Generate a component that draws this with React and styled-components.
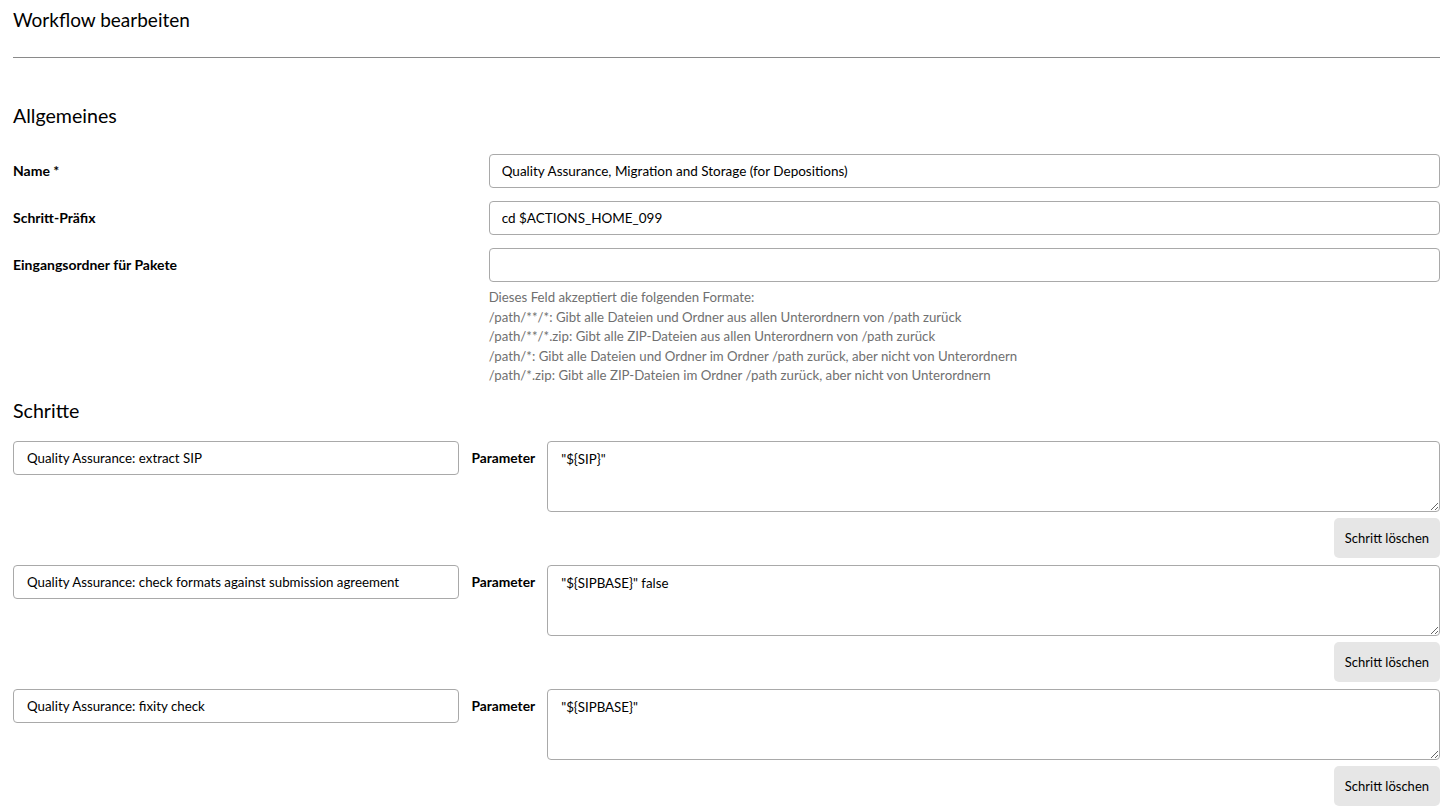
import React from "react";
import styled, { createGlobalStyle } from "styled-components";

const Global = createGlobalStyle`
  html, body { margin: 0; padding: 0; background: #fff; }
  body { font-family: "Lato", "Open Sans", sans-serif; color: #000; }
  * { box-sizing: border-box; }
`;

const Page = styled.div`
  padding: 8px 13px 0 13px;
`;

const Title = styled.h1`
  margin: 0;
  font-size: 19px;
  line-height: 24px;
  font-weight: 400;
`;

const Rule = styled.hr`
  margin: 25px 0 0 0;
  border: 0;
  border-top: 1px solid #8a8a8a;
  height: 0;
`;

const SectionTitle = styled.h2`
  margin: ${(p) => p.$top}px 0 0 0;
  font-size: 19.6px;
  line-height: 26px;
  font-weight: 400;
`;

const FormGrid = styled.div`
  display: grid;
  grid-template-columns: 1fr 2fr;
  row-gap: 13px;
  margin-top: 25px;
`;

const Label = styled.label`
  font-weight: 700;
  font-size: 14px;
  line-height: 34px;
`;

const Field = styled.div`
  display: flex;
  flex-direction: column;
`;

const Input = styled.input`
  height: 34px;
  width: 100%;
  border: 1px solid #a9a9a9;
  border-radius: 4px;
  padding: 0 ${(p) => (p.$small ? 13 : 12)}px;
  font-family: inherit;
  font-size: ${(p) => (p.$small ? 13.3 : 13.5)}px;
  color: #000;
  background: #fff;
  outline: none;
`;

const Help = styled.div`
  margin-top: 6px;
  color: #707070;
  font-size: 13.25px;
  line-height: 19.5px;
`;

const StepList = styled.div`
  margin-top: 17px;
  display: flex;
  flex-direction: column;
  gap: 7px;
`;

const Step = styled.div`
  display: flex;
  flex-direction: column;
  gap: 6px;
`;

const StepRow = styled.div`
  display: grid;
  grid-template-columns: 1fr auto 2fr;
  column-gap: 12px;
  align-items: start;
`;

const ParamLabel = styled.span`
  font-weight: 700;
  font-size: 13.8px;
  line-height: 34px;
`;

const TextArea = styled.textarea`
  height: 71px;
  width: 100%;
  border: 1px solid #a9a9a9;
  border-radius: 4px;
  padding: 9px 13px;
  font-family: inherit;
  font-size: 13.3px;
  line-height: 16px;
  color: #000;
  background: #fff;
  outline: none;
  display: block;
`;

const Actions = styled.div`
  display: flex;
  justify-content: flex-end;
`;

const Button = styled.button`
  height: 40px;
  padding: 0 11px;
  border: 0;
  border-radius: 5px;
  background: #e6e6e6;
  font-family: inherit;
  font-size: 13px;
  color: #000;
  cursor: pointer;
`;

const steps = [
  { name: "Quality Assurance: extract SIP", param: '"${SIP}"' },
  {
    name: "Quality Assurance: check formats against submission agreement",
    param: '"${SIPBASE}" false',
  },
  { name: "Quality Assurance: fixity check", param: '"${SIPBASE}"' },
];

const helpLines = [
  "Dieses Feld akzeptiert die folgenden Formate:",
  "/path/**/*: Gibt alle Dateien und Ordner aus allen Unterordnern von /path zurück",
  "/path/**/*.zip: Gibt alle ZIP-Dateien aus allen Unterordnern von /path zurück",
  "/path/*: Gibt alle Dateien und Ordner im Ordner /path zurück, aber nicht von Unterordnern",
  "/path/*.zip: Gibt alle ZIP-Dateien im Ordner /path zurück, aber nicht von Unterordnern",
];

export default function App() {
  return (
    <>
      <Global />
      <Page>
        <Title>Workflow bearbeiten</Title>
        <Rule />
        <SectionTitle $top={45}>Allgemeines</SectionTitle>
        <FormGrid>
          <Label>Name *</Label>
          <Field>
            <Input defaultValue="Quality Assurance, Migration and Storage (for Depositions)" />
          </Field>
          <Label>Schritt-Präfix</Label>
          <Field>
            <Input defaultValue="cd $ACTIONS_HOME_099" />
          </Field>
          <Label>Eingangsordner für Pakete</Label>
          <Field>
            <Input defaultValue="" />
            <Help>
              {helpLines.map((l) => (
                <div key={l}>{l}</div>
              ))}
            </Help>
          </Field>
        </FormGrid>
        <SectionTitle $top={12}>Schritte</SectionTitle>
        <StepList>
          {steps.map((s) => (
            <Step key={s.name}>
              <StepRow>
                <Input $small defaultValue={s.name} />
                <ParamLabel>Parameter</ParamLabel>
                <TextArea defaultValue={s.param} />
              </StepRow>
              <Actions>
                <Button>Schritt löschen</Button>
              </Actions>
            </Step>
          ))}
        </StepList>
      </Page>
    </>
  );
}
